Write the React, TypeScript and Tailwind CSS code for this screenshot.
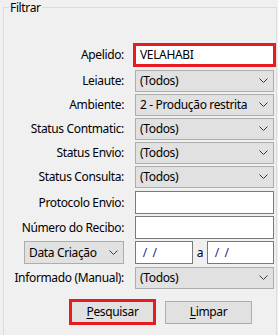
import React from "react";

const Chevron = () => (
  <svg width="9" height="6" viewBox="0 0 9 6" className="shrink-0">
    <path d="M0.5 0.5 L4.5 4.5 L8.5 0.5" fill="none" stroke="#3c3c3c" strokeWidth="1" />
  </svg>
);

const Combo = ({ value, className = "" }: { value: string; className?: string }) => (
  <div
    className={
      "h-[22px] flex items-center justify-between pl-[4px] pr-[5px] bg-[#e1e1e1] border border-[#adadad] text-black " +
      className
    }
  >
    <span className="leading-none whitespace-nowrap">{value}</span>
    <Chevron />
  </div>
);

const TextBox = ({ value = "", className = "" }: { value?: string; className?: string }) => (
  <div className={"h-[23px] flex items-center pl-[4px] bg-white border border-[#7a7a7a] " + className}>
    <span className="whitespace-pre leading-none">{value}</span>
  </div>
);

const Label = ({ children }: { children: React.ReactNode }) => (
  <div className="flex items-center justify-end h-full text-black leading-none whitespace-nowrap">{children}</div>
);

export default function App() {
  return (
    <div
      className="w-[278px] h-[335px] bg-[#f0f0f0] overflow-hidden text-[12px] tracking-[-0.35px] text-black"
      style={{ fontFamily: '"Noto Sans", "Segoe UI", sans-serif' }}
    >
      <fieldset className="ml-[3px] w-[274px] h-[360px] border border-[#dcdcdc] border-b-0 pt-[27px]">
        <legend className="ml-[5px] px-[1px] leading-[15px]">Filtrar</legend>
        <div className="grid grid-cols-[120px_139px] gap-x-[11px]">
          <div className="h-[24px] mt-[1px]">
            <Label>Apelido:</Label>
          </div>
          <div className="h-[24px] mt-[1px] -ml-[2px] w-[143px] border-[3px] border-[#e81b23] bg-white flex items-center pl-[4px]">
            <span className="leading-none">VELAHABI</span>
          </div>

          <div className="h-[22px] mt-[3px]"><Label>Leiaute:</Label></div>
          <Combo value="(Todos)" className="mt-[3px]" />

          <div className="h-[22px] mt-[2px]"><Label>Ambiente:</Label></div>
          <Combo value="2 - Produção restrita" className="mt-[2px]" />

          <div className="h-[22px] mt-[2px]"><Label>Status Contmatic:</Label></div>
          <Combo value="(Todos)" className="mt-[2px]" />

          <div className="h-[22px] mt-[2px]"><Label>Status Envio:</Label></div>
          <Combo value="(Todos)" className="mt-[2px]" />

          <div className="h-[22px] mt-[2px]"><Label>Status Consulta:</Label></div>
          <Combo value="(Todos)" className="mt-[2px]" />

          <div className="h-[23px] mt-[3px]"><Label>Protocolo Envio:</Label></div>
          <TextBox className="mt-[3px]" />

          <div className="h-[23px] mt-[2px]"><Label>Número do Recibo:</Label></div>
          <TextBox className="mt-[2px]" />

          <div className="h-[23px] mt-[2px] flex justify-end">
            <Combo value="Data Criação" className="w-[100px] h-[23px]" />
          </div>
          <div className="h-[23px] mt-[2px] flex items-center">
            <TextBox value=" /  /" className="w-[58px] text-[#1a237e]" />
            <span className="w-[14px] text-center leading-none">a</span>
            <TextBox value=" /  /" className="w-[67px] text-[#1a237e]" />
          </div>

          <div className="h-[22px] mt-[3px]"><Label>Informado (Manual):</Label></div>
          <Combo value="(Todos)" className="mt-[3px]" />
        </div>

        <div className="flex items-center mt-[10px] ml-[65px] gap-[9px]">
          <div className="w-[87px] h-[26px] border-[3px] border-[#e81b23] bg-[#e1e1e1] flex items-center justify-center leading-none">
            <span>
              <span className="underline underline-offset-2">P</span>esquisar
            </span>
          </div>
          <div className="w-[87px] h-[23px] border border-[#adadad] bg-[#e1e1e1] flex items-center justify-center leading-none">
            <span>
              <span className="underline underline-offset-2">L</span>impar
            </span>
          </div>
        </div>
      </fieldset>
    </div>
  );
}
